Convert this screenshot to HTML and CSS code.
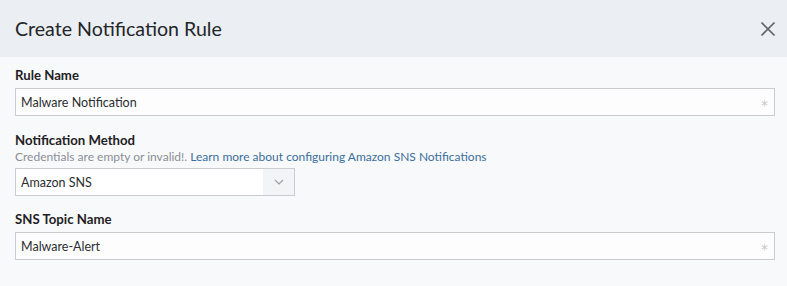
FILE: index.html
```html
<!DOCTYPE html>
<html>
<head>
<meta charset="utf-8">
<link rel="stylesheet" href="styles.css">
</head>
<body>
<div class="modal">
  <div class="header">
    <h1 class="title">Create Notification Rule</h1>
    <button class="close" aria-label="Close">
      <svg width="16" height="16" viewBox="0 0 16 16"><path d="M1.5 1.5 L14.5 14.5 M14.5 1.5 L1.5 14.5" stroke="#5f6368" stroke-width="1.7" fill="none"/></svg>
    </button>
  </div>
  <div class="body">
    <div class="field">
      <label class="label">Rule Name</label>
      <div class="input"><span>Malware Notification</span><span class="req">*</span></div>
    </div>
    <div class="field">
      <label class="label">Notification Method</label>
      <div class="help">Credentials are empty or invalid!. <a class="link">Learn more about configuring Amazon SNS Notifications</a></div>
      <div class="select">
        <span class="select-value">Amazon SNS</span>
        <span class="select-arrow">
          <svg width="10" height="6" viewBox="0 0 10 6"><path d="M1 1 L5 5 L9 1" stroke="#9aa0a6" stroke-width="1.2" fill="none"/></svg>
        </span>
      </div>
    </div>
    <div class="field field-last">
      <label class="label">SNS Topic Name</label>
      <div class="input"><span>Malware-Alert</span><span class="req">*</span></div>
    </div>
  </div>
</div>
</body>
</html>
```

FILE: styles.css
```css
html, body { margin: 0; padding: 0; }
body {
  font-family: "Lato", "Open Sans", sans-serif;
  background: #f8f9fb;
  color: #222;
  width: 787px;
  height: 286px;
  overflow: hidden;
}
.modal { width: 787px; }
.header {
  height: 57px;
  background: #ebeef2;
  display: flex;
  align-items: center;
  justify-content: space-between;
  padding: 0 11px 0 15px;
  box-sizing: border-box;
}
.title {
  margin: 0;
  font-size: 19.6px;
  font-weight: 400;
  color: #232629;
}
.close {
  border: 0;
  background: none;
  padding: 0;
  width: 16px;
  height: 16px;
  display: flex;
}
.body {
  padding: 10px 12px 0 15px;
  display: flex;
  flex-direction: column;
  gap: 16px;
}
.field { display: flex; flex-direction: column; }
.field-last { margin-top: -1px; }
.label {
  font-size: 13.2px;
  font-weight: 700;
  color: #1f2124;
  line-height: 16px;
  margin-bottom: 5px;
}
.help {
  font-size: 12px;
  color: #8a8f96;
  margin: -3px 0 4px;
  line-height: 14px;
}
.link { color: #3b6e9c; }
.input {
  height: 28px;
  box-sizing: border-box;
  border: 1px solid #c9ccd0;
  background: #fdfdfe;
  display: flex;
  align-items: center;
  justify-content: space-between;
  padding: 0 6px 0 5px;
  font-size: 12.5px;
  color: #2b2d30;
}
.req {
  color: #c3c6ca;
  font-family: "DejaVu Sans", sans-serif;
  font-size: 14px;
  line-height: 1;
  padding-top: 5px;
}
.select {
  width: 280px;
  height: 28px;
  box-sizing: border-box;
  border: 1px solid #c9ccd0;
  background: #fff;
  display: flex;
  font-size: 12.5px;
  color: #2b2d30;
}
.select-value { flex: 1; display: flex; align-items: center; padding-left: 5px; }
.select-arrow {
  width: 31px;
  background: #f3f4f6;
  display: flex;
  align-items: center;
  justify-content: center;
}
```
